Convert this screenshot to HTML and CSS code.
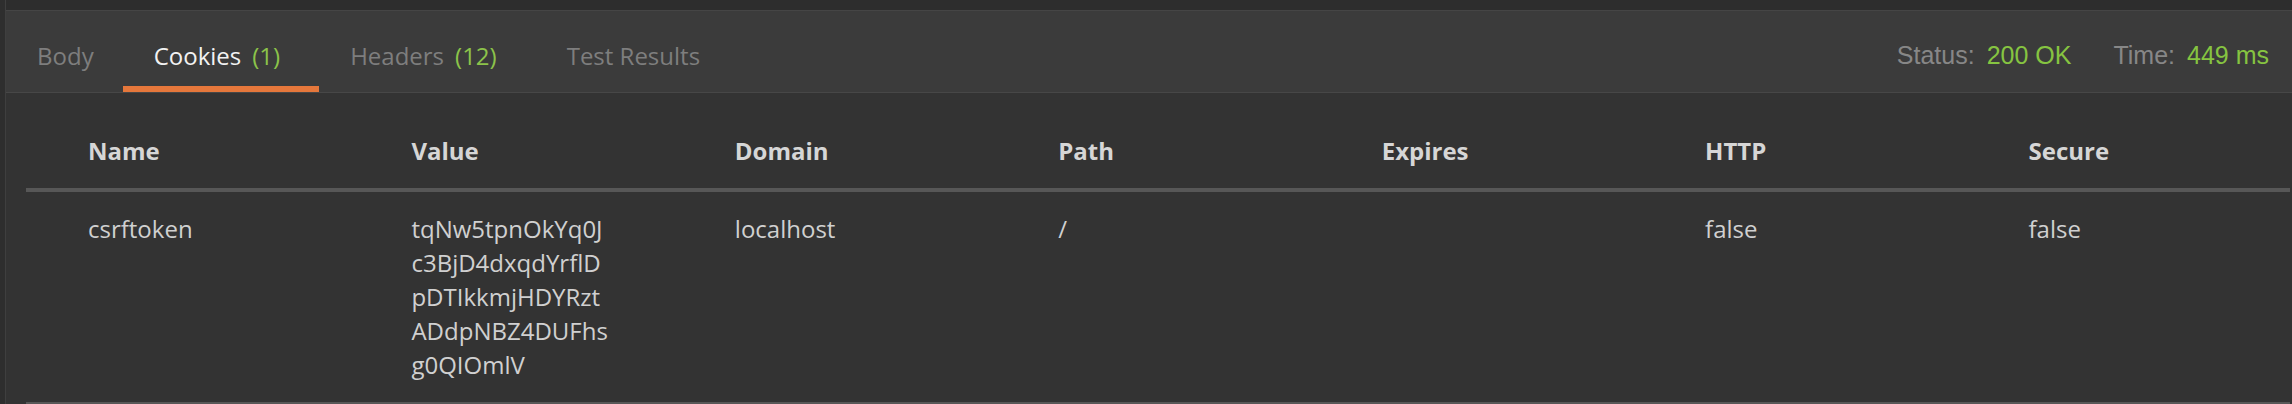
FILE: index.html
```html
<!DOCTYPE html>
<html lang="en">
<head>
<meta charset="utf-8">
<title>Response - Cookies</title>
<link rel="stylesheet" href="styles.css">
</head>
<body>
<div class="app">
  <div class="edge"></div>
  <div class="main">
    <div class="topstrip"></div>
    <div class="tabbar">
      <nav class="tabs">
        <div class="tab">Body</div>
        <div class="tab tab-active">Cookies<span class="count">(1)</span></div>
        <div class="tab">Headers<span class="count">(12)</span></div>
        <div class="tab">Test Results</div>
      </nav>
      <div class="meta">
        <div class="meta-item"><span class="meta-label">Status:</span><span class="meta-value">200 OK</span></div>
        <div class="meta-item"><span class="meta-label">Time:</span><span class="meta-value">449 ms</span></div>
      </div>
    </div>
    <div class="content">
      <table class="cookies">
        <thead>
          <tr>
            <th>Name</th>
            <th>Value</th>
            <th>Domain</th>
            <th>Path</th>
            <th>Expires</th>
            <th>HTTP</th>
            <th>Secure</th>
          </tr>
        </thead>
        <tbody>
          <tr>
            <td>csrftoken</td>
            <td><div class="token">tqNw5tpnOkYq0Jc3BjD4dxqdYrflDpDTIkkmjHDYRztADdpNBZ4DUFhsg0QIOmlV</div></td>
            <td>localhost</td>
            <td>/</td>
            <td></td>
            <td>false</td>
            <td>false</td>
          </tr>
        </tbody>
      </table>
    </div>
  </div>
</div>
</body>
</html>
```
FILE: styles.css
```css
html, body {
  margin: 0;
  padding: 0;
  background: #333333;
  height: 100%;
}

body {
  font-family: "Open Sans", "Liberation Sans", sans-serif;
  overflow: hidden;
}

.app {
  display: flex;
  height: 404px;
}

.edge {
  width: 5px;
  flex: 0 0 5px;
  background: #2e2e2e;
  border-right: 1px solid #3f3f3f;
}

.main {
  flex: 1;
  display: flex;
  flex-direction: column;
  min-width: 0;
}

.topstrip {
  height: 10px;
  background: #2d2d2d;
  border-bottom: 1px solid #454545;
}

.tabbar {
  height: 81px;
  background: #3b3b3b;
  border-bottom: 1px solid #474747;
  display: flex;
  justify-content: space-between;
  align-items: flex-start;
}

.tabs {
  display: flex;
  height: 81px;
}

.tab {
  box-sizing: border-box;
  height: 81px;
  padding: 28px 29px 0 31px;
  border-bottom: 6px solid transparent;
  font-size: 24px;
  line-height: 33px;
  color: #7e7e7e;
  white-space: nowrap;
}

.tab-active {
  color: #f2f2f2;
  border-bottom-color: #e5773b;
}

.count {
  color: #8cc34a;
  margin-left: 11px;
  margin-right: 10px;
}

.meta {
  display: flex;
  gap: 42px;
  padding: 30px 23px 0 0;
  font-family: "Liberation Sans", Arial, sans-serif;
  font-size: 25px;
  line-height: 28px;
}

.meta-item {
  display: flex;
  gap: 12px;
  white-space: nowrap;
}

.meta-label {
  color: #878787;
}

.meta-value {
  color: #86c441;
}

.content {
  flex: 1;
  padding: 0 2px 0 20px;
}

.cookies {
  width: 100%;
  border-collapse: collapse;
  table-layout: fixed;
  font-size: 24px;
}

.cookies th {
  text-align: left;
  font-weight: 700;
  color: #d6d6d6;
  line-height: 33px;
  padding: 41px 10px 21px 62px;
  border-bottom: 4px solid #575757;
  vertical-align: top;
}

.cookies td {
  color: #d0d0d0;
  line-height: 34px;
  padding: 20px 10px 20px 62px;
  border-bottom: 2px solid #575757;
  vertical-align: top;
}

.token {
  width: 198px;
  word-break: break-all;
}
```
